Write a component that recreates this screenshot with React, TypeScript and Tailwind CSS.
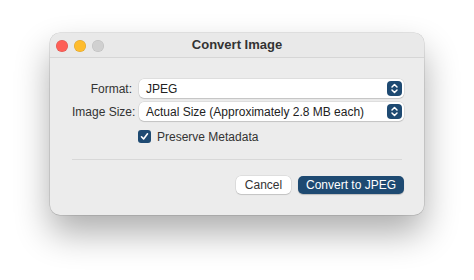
import React from "react";

function Stepper() {
  return (
    <span className="flex h-[15px] w-[15px] items-center justify-center rounded-[4px] bg-[#1e4a72]">
      <svg width="9" height="11" viewBox="0 0 9 11" fill="none" stroke="white" strokeWidth="1.5" strokeLinecap="round" strokeLinejoin="round">
        <path d="M2 4 L4.5 1.5 L7 4" />
        <path d="M2 7 L4.5 9.5 L7 7" />
      </svg>
    </span>
  );
}

function Popup({ value }: { value: string }) {
  return (
    <div className="flex h-[19px] flex-1 items-center justify-between rounded-[5px] bg-white pl-[7px] pr-[2px] shadow-[0_0_0_0.5px_rgba(0,0,0,0.12),0_1px_1px_rgba(0,0,0,0.12)]">
      <span className="text-[12px] leading-none text-[#222]">{value}</span>
      <Stepper />
    </div>
  );
}

export default function App() {
  return (
    <div className="h-[280px] w-[474px] overflow-hidden bg-white pt-[33px] pl-[50px] font-['Liberation_Sans',Arial,sans-serif]">
      <div className="flex h-[182px] w-[374px] flex-col rounded-[10px] bg-[#ececec] shadow-[0_0_0_0.5px_rgba(0,0,0,0.18),0_18px_35px_rgba(0,0,0,0.32)]">
        <div className="relative flex h-[25px] items-center justify-center rounded-t-[10px] border-b border-[#d6d6d6] bg-[#e9e9e9]">
          <div className="absolute left-[6px] top-[7px] flex gap-[6px]">
            <span className="h-[12px] w-[12px] rounded-full bg-[#fe5f57] shadow-[inset_0_0_0_0.5px_rgba(0,0,0,0.15)]" />
            <span className="h-[12px] w-[12px] rounded-full bg-[#febc2e] shadow-[inset_0_0_0_0.5px_rgba(0,0,0,0.15)]" />
            <span className="h-[12px] w-[12px] rounded-full bg-[#d0d0d0] shadow-[inset_0_0_0_0.5px_rgba(0,0,0,0.1)]" />
          </div>
          <span className="text-[13px] font-bold text-[#333]">Convert Image</span>
        </div>

        <div className="flex flex-col px-[22px] pt-[21px]">
          <div className="flex items-center">
            <span className="w-[67px] shrink-0 pr-[7px] text-right text-[12px] text-[#333]">Format:</span>
            <div className="mr-[-2px] flex flex-1"><Popup value="JPEG" /></div>
          </div>
          <div className="mt-[4px] flex items-center">
            <span className="w-[67px] shrink-0 whitespace-nowrap pr-[7px] text-right text-[12px] text-[#333]">Image Size:</span>
            <div className="mr-[-2px] flex flex-1"><Popup value="Actual Size (Approximately 2.8 MB each)" /></div>
          </div>
          <div className="mt-[9px] flex h-[13px] items-center pl-[66px]">
            <span className="flex h-[13px] w-[13px] items-center justify-center rounded-[3px] bg-[#1e4a72]">
              <svg width="9" height="9" viewBox="0 0 9 9" fill="none" stroke="white" strokeWidth="1.6" strokeLinecap="round" strokeLinejoin="round">
                <path d="M1.5 4.8 L3.6 7 L7.5 1.8" />
              </svg>
            </span>
            <span className="ml-[6px] text-[12px] text-[#333]">Preserve Metadata</span>
          </div>
          <div className="mt-[16px] h-px bg-[#d8d8d8]" />
          <div className="mt-[16px] flex justify-end gap-[7px]">
            <button type="button" className="h-[18px] w-[55px] rounded-[5px] bg-white text-[12px] leading-none text-[#333] shadow-[0_0_0_0.5px_rgba(0,0,0,0.12),0_1px_1px_rgba(0,0,0,0.12)]">
              Cancel
            </button>
            <button type="button" className="mr-[-2px] h-[18px] w-[106px] rounded-[5px] bg-[#1e4a72] text-[12px] leading-none text-white shadow-[0_1px_1px_rgba(0,0,0,0.2)]">
              Convert to JPEG
            </button>
          </div>
        </div>
      </div>
    </div>
  );
}
